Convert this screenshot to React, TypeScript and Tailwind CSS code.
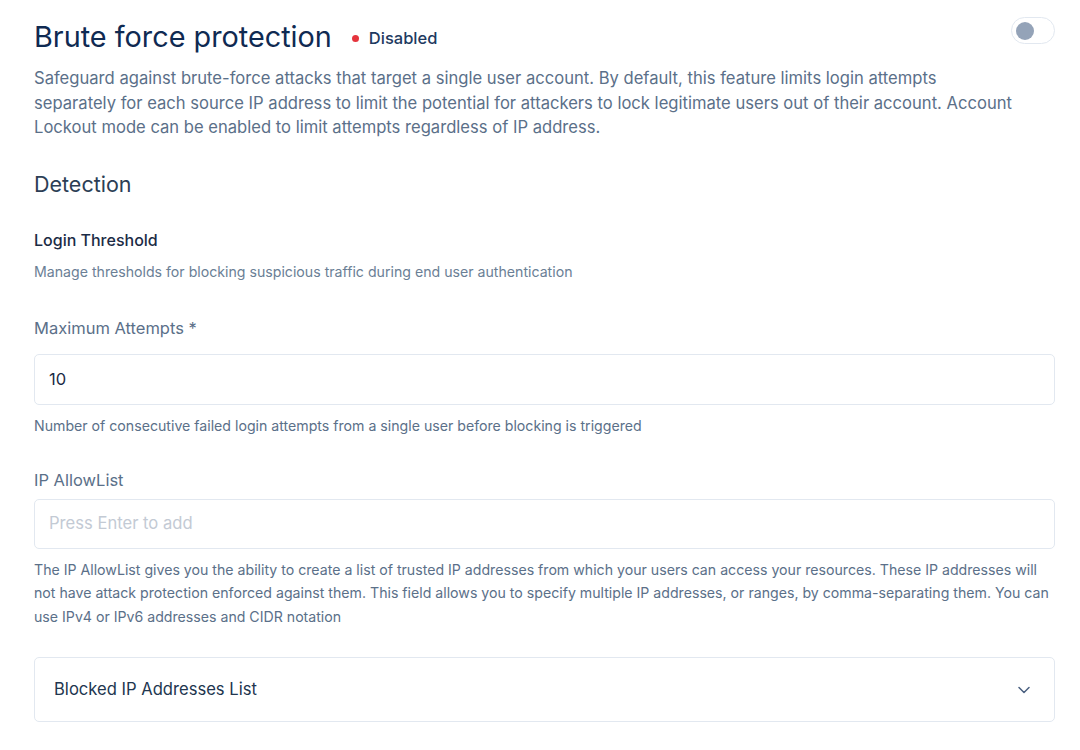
import React from "react";

export default function App() {
  return (
    <div className="min-h-[750px] bg-white" style={{ fontFamily: "Inter, 'Noto Sans', sans-serif" }}>
      <div className="pl-[34px] pr-[25px] pt-[17px]">
        <div className="flex items-start justify-between">
          <div className="flex items-center gap-[20px] pt-[1px]">
            <h1 className="text-[28.8px] leading-[38px] text-[#0f2a52] font-normal">Brute force protection</h1>
            <div className="flex items-center gap-[10px] pt-[2px]">
              <span className="w-[7px] h-[7px] rounded-full bg-[#e5343d]" />
              <span className="text-[16.5px] text-[#1e3a5f] font-medium">Disabled</span>
            </div>
          </div>
          <div className="w-[44px] h-[27px] rounded-full border border-[#e2e8f0] bg-white flex items-center px-[4px]">
            <span className="w-[18px] h-[18px] rounded-full bg-[#94a3b8]" />
          </div>
        </div>
        <p className="mt-[10px] max-w-[985px] text-[16.6px] leading-[24.5px] text-[#5b7089]">
          Safeguard against brute-force attacks that target a single user account. By default, this feature limits login attempts separately for each source IP address to limit the potential for attackers to lock legitimate users out of their account. Account Lockout mode can be enabled to limit attempts regardless of IP address.
        </p>
        <h2 className="mt-[30px] text-[21.5px] leading-[28px] text-[#2c3e55]">Detection</h2>
        <h3 className="mt-[32px] text-[16px] leading-[20px] font-medium text-[#1b2b45]">Login Threshold</h3>
        <p className="mt-[12px] text-[14.15px] leading-[20px] text-[#6b7f96]">Manage thresholds for blocking suspicious traffic during end user authentication</p>
        <label className="block mt-[35px] text-[16.5px] leading-[22px] text-[#5b7089]">Maximum Attempts *</label>
        <div className="mt-[15px] h-[51px] rounded-[5px] border border-[#e2e8f0] flex items-center px-[14px] text-[16.5px] text-[#1b2b45]">10</div>
        <p className="mt-[11px] text-[14.15px] leading-[20px] text-[#5b7089]">Number of consecutive failed login attempts from a single user before blocking is triggered</p>
        <label className="block mt-[33px] text-[16.5px] leading-[22px] text-[#5b7089]">IP AllowList</label>
        <div className="mt-[8px] h-[50px] rounded-[5px] border border-[#e2e8f0] flex items-center px-[14px] text-[16.6px] text-[#c3cad4]">Press Enter to add</div>
        <p className="mt-[9px] text-[14.15px] leading-[23.5px] text-[#5b7089]">
          The IP AllowList gives you the ability to create a list of trusted IP addresses from which your users can access your resources. These IP addresses will not have attack protection enforced against them. This field allows you to specify multiple IP addresses, or ranges, by comma-separating them. You can use IPv4 or IPv6 addresses and CIDR notation
        </p>
        <div className="mt-[29px] h-[65px] rounded-[5px] border border-[#e2e8f0] flex items-center justify-between pl-[19px] pr-[24px]">
          <span className="text-[16.6px] text-[#22364f]">Blocked IP Addresses List</span>
          <svg width="12" height="8" viewBox="0 0 12 8" fill="none">
            <path d="M1 1.5L6 6.5L11 1.5" stroke="#4a6080" strokeWidth="1.5" strokeLinecap="round" strokeLinejoin="round" />
          </svg>
        </div>
      </div>
    </div>
  );
}
